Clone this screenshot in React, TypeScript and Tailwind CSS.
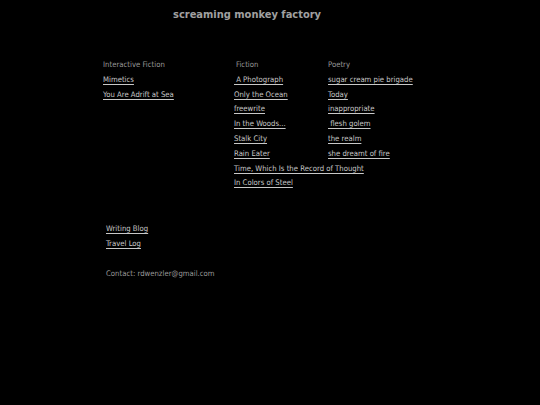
import React from "react";

const Link = ({ children }: { children: React.ReactNode }) => (
  <a href="#" className="underline underline-offset-[1.5px] text-[#c8c8c8]">{children}</a>
);

export default function App() {
  const fiction = ["\u00a0A Photograph", "Only the Ocean", "freewrite", "In the Woods...", "Stalk City", "Rain Eater", "Time, Which Is the Record of Thought", "In Colors of Steel"];
  const poetry = ["sugar cream pie brigade", "Today", "inappropriate", "\u00a0flesh golem", "the realm", "she dreamt of fire"];
  const ifs = ["Mimetics", "You Are Adrift at Sea"];
  return (
    <div className="w-[540px] h-[405px] bg-black overflow-hidden" style={{ fontFamily: '"DejaVu Sans Condensed", "DejaVu Sans", sans-serif' }}>
      <div className="pt-[8px] pl-[173px] text-[11px] font-bold text-[#a0a0a0] leading-[14px]">screaming monkey factory</div>
      <div className="flex mt-[36px] pl-[103px] text-[7.7px] leading-[14.8px]">
        <div className="w-[131px] flex flex-col">
          <div className="text-[#9a9a9a]">Interactive Fiction</div>
          {ifs.map((t) => <div key={t}><Link>{t}</Link></div>)}
        </div>
        <div className="w-[94px] flex flex-col">
          <div className="text-[#9a9a9a] pl-[2px]">Fiction</div>
          {fiction.map((t) => <div key={t} className="whitespace-nowrap"><Link>{t}</Link></div>)}
        </div>
        <div className="flex flex-col">
          <div className="text-[#9a9a9a]">Poetry</div>
          {poetry.map((t) => <div key={t} className="whitespace-nowrap"><Link>{t}</Link></div>)}
        </div>
      </div>
      <div className="mt-[31px] pl-[106px] text-[7.7px] leading-[14.8px] flex flex-col">
        <div><Link>Writing Blog</Link></div>
        <div><Link>Travel Log</Link></div>
        <div className="mt-[15px] text-[#9a9a9a]">Contact: rdwenzler@gmail.com</div>
      </div>
    </div>
  );
}
